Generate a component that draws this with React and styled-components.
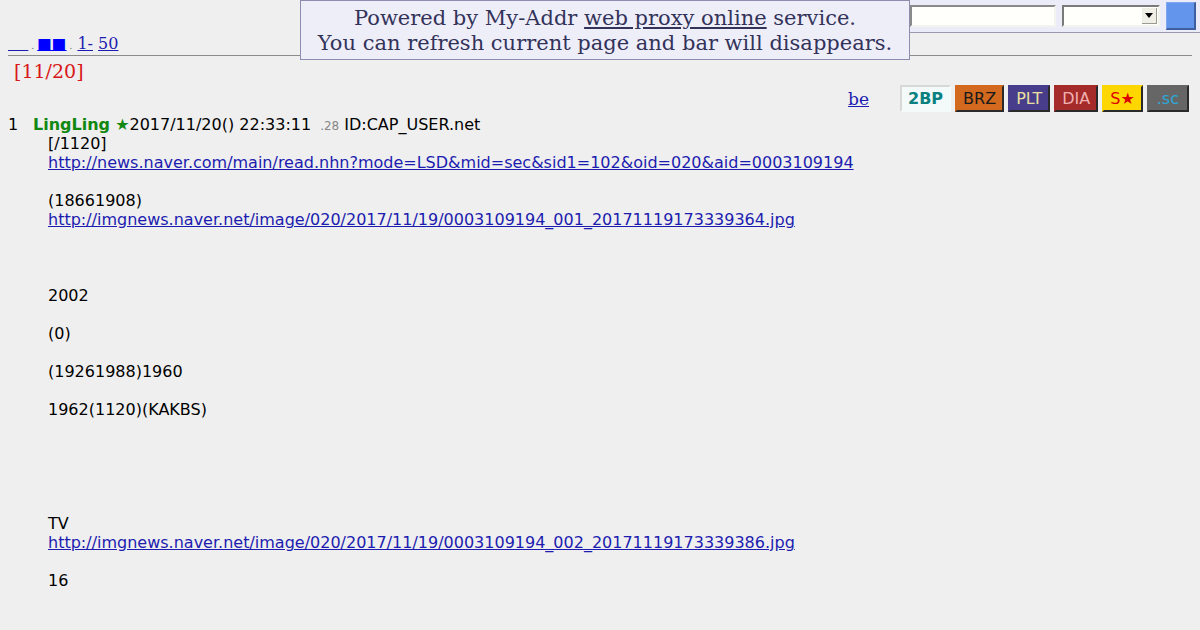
import React from "react";
import styled, { createGlobalStyle } from "styled-components";

const Global = createGlobalStyle`
  html, body { margin: 0; padding: 0; background: #efefef; }
  body { font-family: "DejaVu Sans", sans-serif; color: #000; }
  a { color: #1c1cb0; }
`;

const Page = styled.div`
  position: relative;
  width: 1200px;
  height: 630px;
  overflow: hidden;
`;

const TopBar = styled.div`
  display: flex;
  justify-content: flex-end;
  height: 34px;
`;

const FormBar = styled.form`
  width: 292px;
  height: 33px;
  box-sizing: border-box;
  background: #ececf8;
  border-bottom: 1px solid #9a9aae;
  display: flex;
  align-items: center;
  padding-left: 2px;
  gap: 6px;
`;

const TextInput = styled.div`
  width: 146px;
  height: 22px;
  box-sizing: border-box;
  background: #fffffb;
  border: 2px solid #f4f4ee;
  border-top-color: #8a8a8a;
  border-left-color: #8a8a8a;
`;

const Select = styled.div`
  width: 98px;
  height: 22px;
  box-sizing: border-box;
  background: #fffffb;
  border: 2px solid #f4f4ee;
  border-top-color: #7a7a7a;
  border-left-color: #7a7a7a;
  display: flex;
  justify-content: flex-end;
  padding: 1px;
`;

const Arrow = styled.div`
  width: 14px;
  background: #efefe6;
  border-right: 1px solid #9a9a90;
  border-bottom: 1px solid #9a9a90;
  display: flex;
  align-items: center;
  justify-content: center;
  &::after {
    content: "";
    border-left: 4px solid transparent;
    border-right: 4px solid transparent;
    border-top: 5px solid #000;
  }
`;

const GoButton = styled.div`
  width: 30px;
  height: 28px;
  box-sizing: border-box;
  background: #6495ed;
  border: 1px solid #7fa7f0;
  border-right: 2px solid #3d5f9e;
  border-bottom: 2px solid #3d5f9e;
`;

const Notice = styled.div`
  position: absolute;
  left: 300px;
  top: 0;
  width: 610px;
  height: 60px;
  box-sizing: border-box;
  background: #eeeef9;
  border: 1px solid #8c8cac;
  font-family: "DejaVu Serif", serif;
  font-size: 21px;
  line-height: 25px;
  color: #33335a;
  text-align: center;
  padding-top: 5px;
  white-space: nowrap;
  a { color: #33335a; }
`;

const Content = styled.div`
  padding: 0 8px;
`;

const Nav = styled.div`
  font-family: "DejaVu Serif", serif;
  font-size: 16px;
  line-height: 19px;
  height: 20px;
  color: #1c1cb0;
`;

const Dot = styled.span`
  font-size: 9px;
  color: #666;
  margin: 0 ${(p) => p.$right || 3}px 0 3px;
`;

const Squares = styled.a`
  color: #0000ff;
  font-size: 15.5px;
`;

const Rule = styled.hr`
  margin: 1px 0 0;
  border: 0;
  border-top: 1px solid #8c8c8c;
`;

const Title = styled.div`
  font-family: "DejaVu Serif", serif;
  font-size: 19px;
  line-height: 22px;
  color: #d81818;
  margin: 4px 0 0 6px;
`;

const ToolRow = styled.div`
  display: flex;
  justify-content: flex-end;
  align-items: center;
  gap: 4px;
  margin-top: 3px;
  margin-right: 3px;
`;

const BeLink = styled.a`
  font-family: "DejaVu Serif", serif;
  font-size: 17px;
  margin-right: 27px;
`;

const Tag = styled.span`
  height: 27px;
  box-sizing: border-box;
  padding: 0 ${(p) => p.$pad || 6}px;
  display: inline-flex;
  align-items: center;
  font-size: 16px;
  font-weight: ${(p) => (p.$bold ? "bold" : "normal")};
  background: ${(p) => p.$bg};
  color: ${(p) => p.$fg};
  border: 2px solid ${(p) => p.$bg};
  border-right-color: #2a2a2a;
  border-bottom-color: #2a2a2a;
`;

const FirstTag = styled(Tag)`
  border-color: #d8d8d8;
  border-right-color: #f4fafa;
  border-bottom-color: #f4fafa;
`;

const Post = styled.div`
  margin-top: 3px;
  font-size: 16px;
  line-height: 19px;
`;

const PostHead = styled.div`
  display: flex;
  align-items: baseline;
  white-space: pre;
  height: 19px;
`;

const Num = styled.span`
  width: 25px;
`;

const Name = styled.b`
  color: #118811;
`;

const Star = styled.span`
  color: #118811;
`;

const Small = styled.span`
  font-size: 12px;
  line-height: 12px;
  color: #888;
  margin: 0 5px 0 9px;
`;

const Body = styled.div`
  padding-left: 40px;
`;

const Line = styled.div`
  min-height: 19px;
`;

const lines = [
  "[/1120]",
  { href: "http://news.naver.com/main/read.nhn?mode=LSD&mid=sec&sid1=102&oid=020&aid=0003109194" },
  "",
  "(18661908)",
  { href: "http://imgnews.naver.net/image/020/2017/11/19/0003109194_001_20171119173339364.jpg" },
  "",
  "",
  "",
  "2002",
  "",
  "(0)",
  "",
  "(19261988)1960",
  "",
  "1962(1120)(KAKBS)",
  "",
  "",
  "",
  "",
  "",
  "TV",
  { href: "http://imgnews.naver.net/image/020/2017/11/19/0003109194_002_20171119173339386.jpg" },
  "",
  "16",
];

export default function App() {
  return (
    <Page>
      <Global />
      <TopBar>
        <FormBar>
          <TextInput />
          <Select>
            <Arrow />
          </Select>
          <GoButton />
        </FormBar>
      </TopBar>
      <Content>
        <Nav>
          <a href="#">{"\u00a0\u00a0\u00a0\u00a0"}</a>
          <Dot>.</Dot>
          <Squares href="#">■■</Squares>
          <Dot $right={5}>.</Dot>
          <a href="#">1-</a> <a href="#">50</a>
        </Nav>
        <Rule />
        <Title>[11/20]</Title>
        <ToolRow>
          <BeLink href="#">be</BeLink>
          <FirstTag $bg="#f4fafa" $fg="#0a8080" $bold>
            2BP
          </FirstTag>
          <Tag $bg="#d2691e" $fg="#1a1a1a">BRZ</Tag>
          <Tag $bg="#483d8b" $fg="#e8e0a0">PLT</Tag>
          <Tag $bg="#a52a2a" $fg="#f0b0b0">DIA</Tag>
          <Tag $bg="#ffd700" $fg="#dd0000">S★</Tag>
          <Tag $bg="#666666" $fg="#2aa8d8" $pad={8}>.sc</Tag>
        </ToolRow>
        <Post>
          <PostHead>
            <Num>1</Num>
            <Name>LingLing</Name>
            <Star> ★</Star>
            <span>2017/11/20() 22:33:11</span>
            <Small>.28</Small>
            <span>ID:CAP_USER.net</span>
          </PostHead>
          <Body>
            {lines.map((l, i) =>
              typeof l === "string" ? (
                <Line key={i}>{l}</Line>
              ) : (
                <Line key={i}>
                  <a href="#">{l.href}</a>
                </Line>
              )
            )}
          </Body>
        </Post>
      </Content>
      <Notice>
        Powered by My-Addr <a href="#">web proxy online</a> service.
        <br />
        You can refresh current page and bar will disappears.
      </Notice>
    </Page>
  );
}
